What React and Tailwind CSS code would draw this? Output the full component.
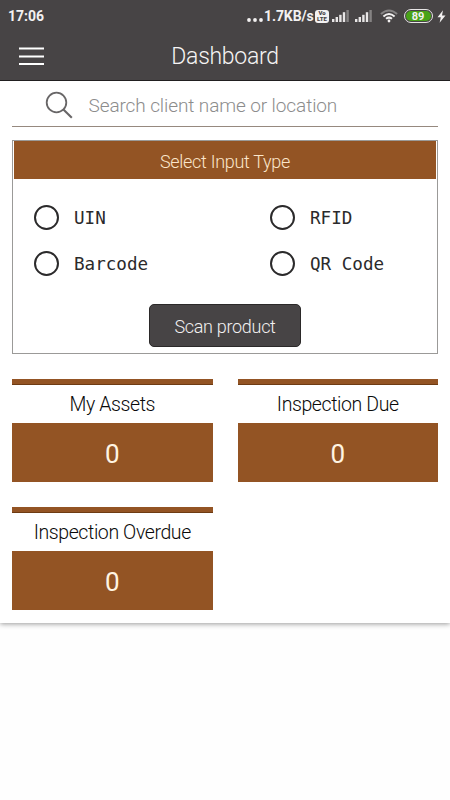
import { useState } from "react";

const inputTypes = ["UIN", "RFID", "Barcode", "QR Code"];

const stats = [
  { title: "My Assets", value: 0 },
  { title: "Inspection Due", value: 0 },
  { title: "Inspection Overdue", value: 0 },
];

function Signal({ className }) {
  return (
    <svg className={className} width="18" height="12" viewBox="0 0 18 12" fill="#e8e6e6">
      <rect x="0" y="9" width="2.4" height="3" />
      <rect x="3.6" y="7" width="2.4" height="5" />
      <rect x="7.2" y="4.8" width="2.4" height="7.2" />
      <rect x="10.8" y="2.2" width="2.4" height="9.8" />
      <rect x="14.4" y="0" width="2.4" height="12" fill="#858383" />
    </svg>
  );
}

function StatusBar() {
  return (
    <div className="flex h-8 items-center pl-2 pr-1 text-[#f3f1f1]">
      <span className="text-[14px] font-bold leading-none">17:06</span>
      <div className="ml-auto flex items-center">
        <svg width="16" height="4" viewBox="0 0 16 4" fill="#f3f1f1" className="mt-[7px] mr-[1px]">
          <circle cx="2" cy="2" r="1.9" />
          <circle cx="8" cy="2" r="1.9" />
          <circle cx="14" cy="2" r="1.9" />
        </svg>
        <span className="w-[50px] whitespace-nowrap text-[14px] font-bold leading-none tracking-[-0.1px]">1.7KB/s</span>
        <span className="ml-[1px] mr-[1px] flex h-[13px] w-[14px] flex-col items-center justify-center rounded-[3px] bg-[#f3f1f1] text-[6px] font-black leading-[6px] text-[#474445]">
          <span>Vo</span>
          <span>LTE</span>
        </span>
        <Signal className="ml-[2px]" />
        <Signal className="ml-[5px]" />
        <svg className="ml-[7px]" width="18" height="14" viewBox="0 0 18 14" fill="none" strokeWidth="2">
          <path d="M0.9 5.1Q9 -2 17.1 5.1" stroke="#858383" />
          <path d="M3.4 7.4Q9 2.7 14.6 7.4" stroke="#f3f1f1" />
          <path d="M6 9.8Q9 7.4 12 9.8" stroke="#f3f1f1" />
          <circle cx="9" cy="12" r="1.4" fill="#f3f1f1" />
        </svg>
        <span className="ml-[6px] flex h-[14px] w-[29px] rounded-full border-[1.5px] border-[#e8e6e6] p-[1px]">
          <span className="flex w-full items-center justify-center rounded-full bg-[#48a317] pr-[1px] text-[11px] font-bold leading-none">
            89
          </span>
        </span>
        <svg className="ml-[4px]" width="9" height="13" viewBox="0 0 9 13" fill="#f3f1f1">
          <path d="M6 0.3L0.5 7.3H3.8L2.6 12.7L8.5 5.4H5Z" />
        </svg>
      </div>
    </div>
  );
}

function StatCard({ title, value }) {
  return (
    <div>
      <div className="h-[6px] border-b border-[#6e3b13] bg-[#935424]" />
      <div className="flex h-[38px] items-center justify-center pt-[2px] text-[19.5px] font-light tracking-[-0.4px] text-[#0a0a0a]">
        {title}
      </div>
      <div className="flex h-[59px] items-center justify-center bg-[#935424] pt-[3px] text-[26px] text-[#fff4e2]">
        {value}
      </div>
    </div>
  );
}

export default function App() {
  const [selected, setSelected] = useState(null);

  return (
    <div className="min-h-screen bg-[#fefefe] font-['Roboto',sans-serif]">
      <div className="h-[623px] bg-white shadow-[0_1px_5px_rgba(0,0,0,0.4)]">
        <header className="h-[81px] border-b border-[#211f20] bg-[#474445]">
          <StatusBar />
          {/* Title bar */}
          <div className="flex h-[48px] items-center px-[19px]">
            <button aria-label="Open menu" className="w-[25px]">
              <svg width="25" height="20" viewBox="0 0 25 20" stroke="#fff" strokeWidth="2">
                <path d="M0 2.5H25M0 10.5H25M0 18H25" />
              </svg>
            </button>
            <h1 className="flex-1 pr-[25px] pt-[3px] text-center text-[23px] font-light tracking-[-0.3px] text-[#f6f4f4]">
              Dashboard
            </h1>
          </div>
        </header>

        <main className="px-[12px]">
          {/* Search */}
          <div className="flex h-[46px] items-center border-b border-[#96897f] pl-[33px] pt-[2px]">
            <svg width="28" height="28" viewBox="0 0 28 28" fill="none" stroke="#686667" strokeWidth="1.8">
              <circle cx="11.5" cy="11.5" r="9.8" />
              <path d="M18.4 18.4L26.8 26.8" strokeWidth="2.1" />
            </svg>
            <input
              className="ml-[15.5px] w-[320px] bg-transparent pt-[4px] text-[19px] font-light tracking-[-0.1px] outline-none placeholder:text-[#8c8c8c]"
              placeholder="Search client name or location"
            />
          </div>

          {/* Input type */}
          <section className="mt-[13px] h-[214px] border border-[#9b9a98]">
            <h2 className="mx-[1px] flex h-[38px] items-center justify-center bg-[#935424] pt-[2px] text-[18px] font-light tracking-[-0.3px] text-[#fbe6cb]">
              Select Input Type
            </h2>
            <div className="grid grid-cols-[236px_1fr] gap-y-[21px] pl-[21px] pt-[26px]">
              {inputTypes.map((type) => (
                <button key={type} className="flex h-[25px] items-center" onClick={() => setSelected(type)}>
                  <span className="flex h-[25px] w-[25px] items-center justify-center rounded-full border-[2.5px] border-[#2b2a2b]">
                    {selected === type && <span className="h-3 w-3 rounded-full bg-[#2b2a2b]" />}
                  </span>
                  <span className="ml-[15px] pt-[2px] font-['DejaVu_Sans_Mono',monospace] text-[17.6px] text-[#2b2a2b]">
                    {type}
                  </span>
                </button>
              ))}
            </div>
            <button className="mx-auto mt-[28px] flex h-[43px] w-[152px] items-center justify-center rounded-[5px] border border-[#2b2929] bg-[#474445] pt-[2px] text-[18px] font-light tracking-[-0.3px] text-[#f3f1f1]">
              Scan product
            </button>
          </section>

          {/* Stats */}
          <div className="mt-[25px] grid grid-cols-2 gap-x-[25px] gap-y-[25px]">
            {stats.map((item) => (
              <StatCard key={item.title} title={item.title} value={item.value} />
            ))}
          </div>
        </main>
      </div>
    </div>
  );
}
